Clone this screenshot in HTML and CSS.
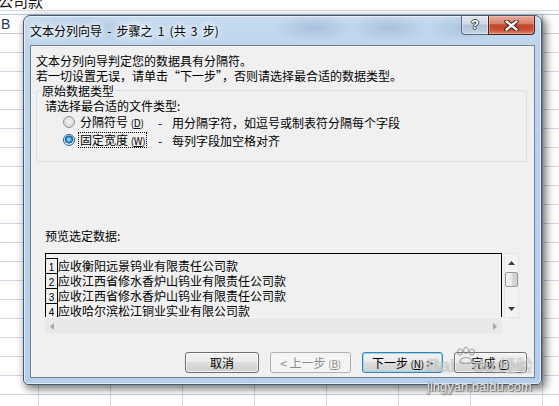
FILE: index.html
```html
<!DOCTYPE html>
<html lang="zh-CN">
<head>
  <meta charset="UTF-8">
  <meta name="viewport" content="width=device-width, initial-scale=1.0">
  <title>文本分列向导</title>
  <link rel="stylesheet" href="styles.css">
</head>
<body>

  <div class="sheet">
    <div class="formula-bar"><span>公司款</span></div>
    <div class="col-head"><span>B</span></div>
    <div class="cells"></div>

    <!-- 文本分列向导 对话框 -->
    <div class="dialog">
      <div class="titlebar">
        <span class="title">文本分列向导 - 步骤之 1 (共 3 步)</span>
        <div class="caption">
          <span class="cap-help">?</span>
          <span class="cap-close">
            <svg width="15" height="11" viewBox="0 0 15 11">
              <path d="M2.5 1.5 L12.5 9.5 M12.5 1.5 L2.5 9.5" stroke="#3b1a14" stroke-width="4.4" stroke-linecap="round"/>
              <path d="M2.5 1.5 L12.5 9.5 M12.5 1.5 L2.5 9.5" stroke="#fff" stroke-width="2.4" stroke-linecap="round"/>
            </svg>
          </span>
        </div>
      </div>

      <div class="client">
        <p class="line">文本分列向导判定您的数据具有分隔符。</p>
        <p class="line">若一切设置无误，请单击“下一步”，否则请选择最合适的数据类型。</p>

        <fieldset class="group">
          <legend>原始数据类型</legend>
          <div class="hint">请选择最合适的文件类型:</div>
          <div class="opt">
            <span class="radio"></span>
            <span class="opt-name"><span class="focus">分隔符号 <span class="key">(<u>D</u>)</span></span></span>
            <span class="dash">-</span>
            <span>用分隔字符，如逗号或制表符分隔每个字段</span>
          </div>
          <div class="opt">
            <span class="radio checked"></span>
            <span class="opt-name"><span class="focus on">固定宽度 <span class="key">(<u>W</u>)</span></span></span>
            <span class="dash">-</span>
            <span>每列字段加空格对齐</span>
          </div>
        </fieldset>

        <div class="preview-label">预览选定数据:</div>
        <div class="preview">
          <div class="preview-main">
            <div class="data">
              <div class="row"><span class="num">1</span><span>应收衡阳远景钨业有限责任公司款</span></div>
              <div class="row"><span class="num">2</span><span>应收江西省修水香炉山钨业有限责任公司款</span></div>
              <div class="row"><span class="num">3</span><span>应收江西省修水香炉山钨业有限责任公司款</span></div>
              <div class="row"><span class="num">4</span><span>应收哈尔滨松江铜业实业有限公司款</span></div>
            </div>
            <div class="hscroll">
              <svg width="4" height="7" viewBox="0 0 4 7"><polygon points="4,0 0,3.5 4,7" fill="#a6a6a6"/></svg>
              <svg width="4" height="7" viewBox="0 0 4 7"><polygon points="0,0 4,3.5 0,7" fill="#a6a6a6"/></svg>
            </div>
          </div>
          <div class="vscroll">
            <div class="v-arrow">
              <svg width="7" height="4" viewBox="0 0 7 4"><polygon points="0,4 3.5,0 7,4" fill="#3c3c3c"/></svg>
            </div>
            <div class="thumb"></div>
            <div class="v-space"></div>
            <div class="v-arrow">
              <svg width="7" height="4" viewBox="0 0 7 4"><polygon points="0,0 7,0 3.5,4" fill="#3c3c3c"/></svg>
            </div>
          </div>
        </div>

        <div class="buttons">
          <button class="btn w74">取消</button>
          <button class="btn w81 disabled">&lt; 上一步 <span class="key">(<u>B</u>)</span></button>
          <button class="btn w81 default">下一步 <span class="key">(<u>N</u>)</span> &gt;</button>
          <button class="btn w73">完成 <span class="key">(<u>F</u>)</span></button>
        </div>
      </div>
    </div>

    <!-- 水印 -->
    <div class="watermark">
      <div class="wm-logo">
        <span>Bai</span>
        <svg width="22" height="18" viewBox="0 0 22 18">
          <g fill="none" stroke="#8a8a8a" stroke-width="1.2" opacity="0.7">
            <ellipse cx="5" cy="5" rx="2.4" ry="3"/>
            <ellipse cx="11" cy="3.5" rx="2.4" ry="3"/>
            <ellipse cx="17" cy="5" rx="2.4" ry="3"/>
            <path d="M5 15 C6 9, 16 9, 17 15 C15 17, 7 17, 5 15 Z"/>
          </g>
        </svg>
        <span>du</span>
        <span class="wm-cn">经验</span>
      </div>
      <div class="wm-url">jingyan.baidu.com</div>
    </div>
  </div>

</body>
</html>
```

FILE: styles.css
```css
body {
  margin: 0;
  overflow: hidden;
  background: #fff;
}

.sheet {
  position: relative;
  width: 559px;
  height: 406px;
  overflow: hidden;
  background: #fff;
  display: flex;
  flex-direction: column;
}

/* Excel 背景 */
.formula-bar {
  height: 10px;
  border-bottom: 1px solid #d3dbe4;
  overflow: hidden;
  font-family: "Noto Sans CJK SC", sans-serif;
  font-size: 15px;
  line-height: 15px;
  color: #111;
}

.formula-bar span {
  display: block;
  margin: -7px 0 0 -2px;
}

.col-head {
  margin-top: 3px;
  height: 18px;
  border-top: 1px solid #bcc7d4;
  border-bottom: 1px solid #c5cfdb;
  background-image: linear-gradient(to right, #c5cfdb 1px, transparent 1px);
  background-size: 72px 18px;
  background-position: 38px 0;
  font-family: "Liberation Sans", sans-serif;
  font-size: 14px;
  line-height: 18px;
  color: #1e395b;
  padding-left: 1px;
}

.cells {
  flex: 1;
  background-image:
    linear-gradient(to bottom, #d0d7e5 1px, transparent 1px),
    linear-gradient(to right, #d0d7e5 1px, transparent 1px);
  background-size: 72px 19px;
  background-position: 38px 18px;
}

/* 对话框窗口 */
.dialog {
  position: absolute;
  left: 23px;
  top: 15px;
  width: 519px;
  height: 370px;
  box-sizing: border-box;
  border: 1px solid #475a72;
  border-radius: 7px 7px 5px 5px;
  padding: 0 6px 6px 6px;
  display: flex;
  flex-direction: column;
  background:
    radial-gradient(ellipse 40px 14px at 290px 12px, rgba(120, 150, 185, 0.35), transparent),
    radial-gradient(ellipse 40px 14px at 365px 12px, rgba(120, 150, 185, 0.35), transparent),
    radial-gradient(ellipse 40px 14px at 440px 12px, rgba(120, 150, 185, 0.3), transparent),
    radial-gradient(ellipse 60px 14px at 60px 12px, rgba(120, 150, 185, 0.25), transparent),
    linear-gradient(180deg, #c6dbef 0%, #bcd4ec 10%, #b4cfeb 100%);
  box-shadow:
    inset 0 0 0 1px rgba(255, 255, 255, 0.6),
    3px 3px 9px 1px rgba(0, 0, 0, 0.55);
  font-family: "Noto Sans CJK SC", sans-serif;
  font-size: 12px;
  color: #000;
}

.titlebar {
  height: 29px;
  display: flex;
  align-items: flex-start;
}

.title {
  padding-top: 7px;
  line-height: 15px;
  font-size: 12px;
  word-spacing: 2.5px;
  text-shadow: 0 0 5px #fff, 0 0 8px #fff, 0 0 10px #fff;
}

.caption {
  margin-left: auto;
  display: flex;
}

.cap-help {
  width: 27px;
  height: 19px;
  box-sizing: border-box;
  border: 1px solid #55677e;
  border-top: none;
  border-right: none;
  border-radius: 0 0 0 4px;
  background: linear-gradient(#dfe8f2, #cbd8e6 45%, #b0c1d5 50%, #c3d3e5);
  box-shadow: inset 0 0 0 1px rgba(255, 255, 255, 0.45);
  font-family: "Liberation Sans", sans-serif;
  font-weight: bold;
  font-size: 13px;
  line-height: 18px;
  text-align: center;
  color: #fff;
  text-shadow: 1px 0 #444, -1px 0 #444, 0 1px #444, 0 -1px #444;
}

.cap-close {
  width: 47px;
  height: 19px;
  box-sizing: border-box;
  border: 1px solid #4e2119;
  border-top: none;
  border-radius: 0 0 4px 0;
  background: linear-gradient(#e8ab9b, #d8806a 42%, #c2432b 50%, #c8523a 78%, #dd8a6c);
  box-shadow: inset 0 0 0 1px rgba(255, 220, 210, 0.35);
  display: flex;
  align-items: center;
  justify-content: center;
}

.client {
  flex: 1;
  border: 1px solid #6f8196;
  background: #f0f0f0;
  padding: 7px 7px 4px 5px;
  display: flex;
  flex-direction: column;
}

.line {
  margin: 0;
  height: 15px;
  line-height: 15px;
}

.key {
  font-size: 10px;
  letter-spacing: -0.3px;
}

/* 原始数据类型 */
.group {
  margin: 0;
  padding: 0 0 12px 0;
  border: 1px solid #d5dfe5;
  border-radius: 3px;
  min-width: 0;
}

.group legend {
  margin-left: 4px;
  padding: 0 1px;
  line-height: 15px;
}

.hint {
  margin-left: 8px;
  line-height: 15px;
  height: 15px;
}

.opt {
  margin-left: 26px;
  height: 18px;
  display: flex;
  align-items: center;
  line-height: 15px;
}

.radio {
  width: 12px;
  height: 12px;
  box-sizing: border-box;
  border-radius: 50%;
  border: 1px solid #8f9396;
  background: radial-gradient(circle at 50% 45%, #f4f4f4 0, #e4e4e4 45%, #cdcdcd 100%);
}

.radio.checked {
  border-color: #2c628b;
  background: radial-gradient(circle at 50% 45%, #c9f0ff 0, #55b8ec 1.6px, #1a6fbf 3.2px, #134f8c 3.8px, #e9eef3 4.3px, #d4dbe2 100%);
}

.opt-name {
  width: 79px;
  margin-left: 3px;
  display: flex;
}

.focus {
  border: 1px dotted transparent;
  padding: 0 1px;
  line-height: 13px;
}

.focus.on {
  border-color: #000;
}

.dash {
  width: 14px;
  padding-left: 1px;
}

/* 预览 */
.preview-label {
  margin: 66px 0 0 9px;
  height: 15px;
  line-height: 15px;
}

.preview {
  margin: 10px 0 0 9px;
  display: flex;
  gap: 2px;
  align-items: flex-start;
}

.preview-main {
  width: 457px;
}

.data {
  height: 64px;
  box-sizing: border-box;
  border: 1px solid #000;
  border-bottom: none;
  padding-top: 4px;
  overflow: hidden;
}

.row {
  display: flex;
  height: 15px;
  line-height: 15px;
}

.num {
  width: 11px;
  height: 14px;
  border-top: 1px solid #000;
  border-right: 1px solid #000;
  display: flex;
  align-items: flex-end;
  justify-content: center;
  font-family: "Liberation Sans", sans-serif;
  font-size: 10px;
  line-height: 11px;
}

.hscroll {
  height: 17px;
  box-sizing: border-box;
  border-top: 1px solid #f6f6f6;
  background: #e9e9e9;
  display: flex;
  align-items: center;
  justify-content: space-between;
  padding: 0 5px;
}

.vscroll {
  width: 15px;
  height: 65px;
  box-sizing: border-box;
  border: 1px solid #e6e6e6;
  background: #f3f3f3;
  display: flex;
  flex-direction: column;
  align-items: center;
}

.v-arrow {
  height: 17px;
  display: flex;
  align-items: center;
  justify-content: center;
}

.thumb {
  width: 13px;
  height: 15px;
  margin-top: 1px;
  box-sizing: border-box;
  border: 1px solid #969696;
  border-radius: 2px;
  background: linear-gradient(to right, #f5f5f5, #e9e9e9 50%, #d9d9d9 51%, #d0d0d0);
}

.v-space {
  flex: 1;
}

/* 按钮 */
.buttons {
  margin-top: auto;
  display: flex;
  justify-content: flex-end;
  gap: 11px;
}

.btn {
  height: 21px;
  box-sizing: border-box;
  border: 1px solid #707070;
  border-radius: 3px;
  background: linear-gradient(#f2f2f2 0, #ebebeb 45%, #dddddd 50%, #cfcfcf 100%);
  box-shadow: inset 0 0 0 1px rgba(255, 255, 255, 0.7);
  font-family: "Noto Sans CJK SC", sans-serif;
  font-size: 12px;
  line-height: 19px;
  padding: 0;
  color: #000;
  text-align: center;
}

.w73 { width: 73px; }
.w74 { width: 74px; }
.w81 { width: 81px; }

.btn.disabled {
  border-color: #adb2b5;
  background: #f4f4f4;
  box-shadow: none;
  color: #8d8d8d;
}

.btn.default {
  border-color: #3c7fb1;
  box-shadow: inset 0 0 0 1px #8fdcf7;
}

/* 百度经验水印 */
.watermark {
  position: absolute;
  left: 427px;
  top: 345px;
  font-family: "Liberation Sans", sans-serif;
  pointer-events: none;
}

.wm-logo {
  display: flex;
  align-items: flex-end;
  height: 32px;
  font-size: 18px;
  font-weight: bold;
  color: rgba(255, 255, 255, 0.55);
  text-shadow: 0 0 1px rgba(90, 90, 90, 0.6);
}

.wm-logo svg {
  align-self: flex-start;
  margin: 2px -4px 0 0;
}

.wm-cn {
  margin-left: 4px;
  font-family: "Noto Sans CJK SC", sans-serif;
  font-size: 17px;
  font-weight: normal;
}

.wm-url {
  margin-top: 3px;
  font-size: 13px;
  line-height: 14px;
  color: #e9e9e9;
  text-shadow: 0 0 1px #555, 1px 1px 1px rgba(0, 0, 0, 0.45);
}
```
